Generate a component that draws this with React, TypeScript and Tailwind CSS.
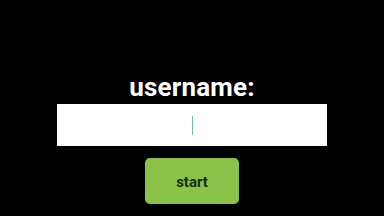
export default function App() {
  return (
    <div className="w-[384px] h-[216px] bg-black flex flex-col items-center pt-[75px]" style={{ fontFamily: 'Roboto, "Liberation Sans", sans-serif' }}>
      <div className="text-white font-bold text-[26px] leading-[25px] tracking-[0.2px]">username:</div>
      <div className="mt-[4px] w-[270px] h-[42px] bg-white flex items-center justify-center">
        <div className="w-[1.5px] h-[19px] bg-[#6cbfae] ml-[1px]" />
      </div>
      <button className="mt-[12px] w-[94px] h-[46px] rounded-[5px] bg-[#8bc34a] text-[#14300c] font-bold text-[15px] flex items-center justify-center pt-[3px]">
        start
      </button>
    </div>
  );
}
